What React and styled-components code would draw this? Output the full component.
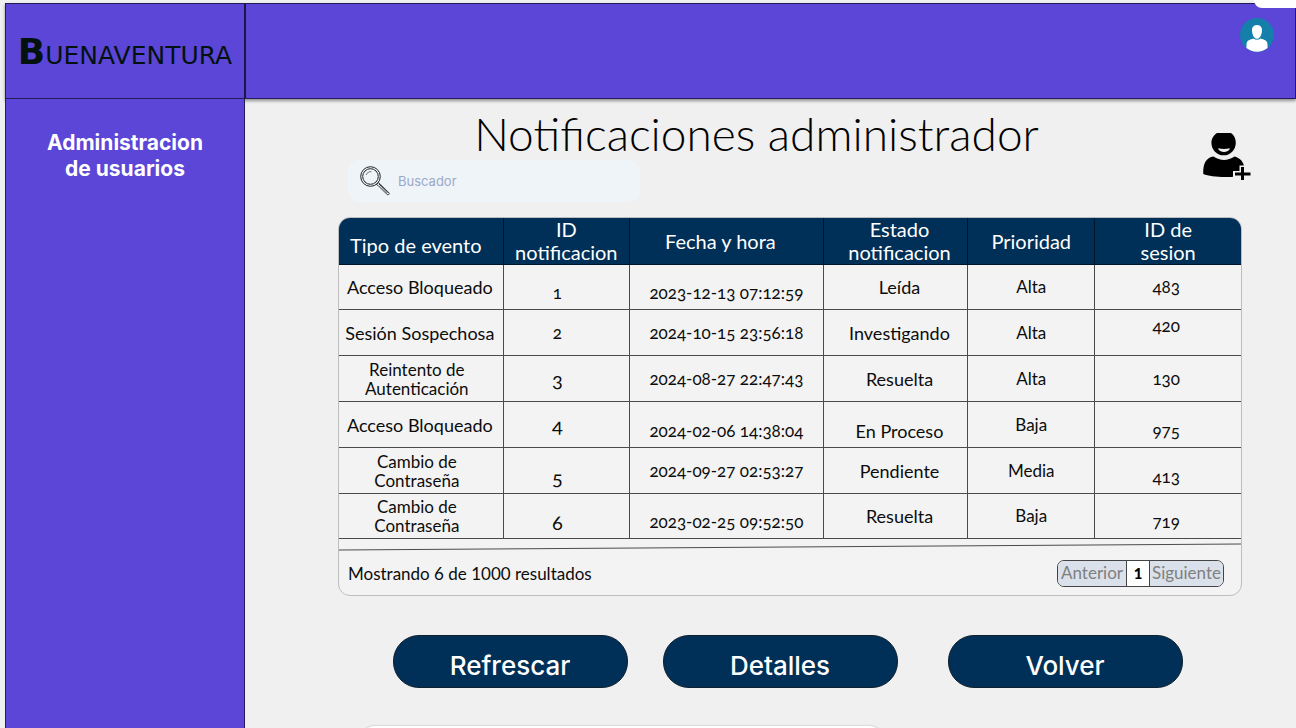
import React from "react";
import styled, { createGlobalStyle } from "styled-components";

const INTER = `Inter, "Liberation Sans", sans-serif`;
const LATO = `Lato, "Open Sans", sans-serif`;
const NAVY = "#003058";
const PURPLE = "#5b46d7";
const LINE = "#4a4a4a";

const GlobalStyle = createGlobalStyle`
  *, *::before, *::after { box-sizing: border-box; }
  body { margin: 0; background: #f0f0f0; }
  button, input { font: inherit; margin: 0; }
`;

const Page = styled.div`
  position: relative;
  display: flex;
  flex-direction: column;
  height: 100vh;
  padding: 3px 0 0 5px;
  overflow: hidden;
  font-family: ${LATO};
  color: #0c0c0c;
  background: #f0f0f0;
`;

const TopBar = styled.header`
  position: relative;
  display: flex;
  flex: none;
  height: 96px;
  background: ${PURPLE};
  border: 1px solid #241c55;
  box-shadow: 0 2px 3px rgba(0, 0, 0, 0.4);
`;

const Brand = styled.a`
  display: flex;
  align-items: baseline;
  justify-content: center;
  width: 240px;
  padding-top: 26px;
  border-right: 2px solid #1d1645;
  font-family: "DejaVu Sans", sans-serif;
  font-size: 25px;
  line-height: 44px;
  color: #04120f;
  text-decoration: none;
`;

const BrandInitial = styled.span`
  font-size: 36px;
  font-weight: 700;
`;

const AccountButton = styled.button`
  align-self: flex-start;
  width: 34px;
  height: 34px;
  margin: 14px 21px 0 auto;
  padding: 0;
  border: 0;
  background: none;
  cursor: pointer;

  svg { display: block; }
`;

const Body = styled.div`
  display: flex;
  flex: 1;
  min-height: 0;
`;

const Sidebar = styled.nav`
  position: relative;
  flex: none;
  width: 240px;
  padding: 31px 40px;
  text-align: center;
  background: ${PURPLE};
  border: solid #241c55;
  border-width: 0 1px;
`;

const SidebarLink = styled.a`
  font-family: ${INTER};
  font-size: 21px;
  font-weight: 700;
  line-height: 26px;
  color: #fff;
  text-decoration: none;
`;

const Main = styled.main`
  flex: 1;
  min-width: 0;
  padding: 13px 54px 0 93px;
`;

const Heading = styled.div`
  display: flex;
  align-items: center;
  gap: 28px;
  margin-right: -9px;
`;

const HeadingText = styled.div`
  flex: 1;
`;

const Title = styled.h1`
  margin: 0;
  padding-bottom: 4px;
  font-size: 46px;
  font-weight: 300;
  line-height: 44px;
  text-align: center;
  color: #000;
`;

const AddUserButton = styled.button`
  flex: none;
  width: 48px;
  height: 48px;
  padding: 0;
  border: 0;
  background: none;
  cursor: pointer;

  svg { display: block; }
`;

const Search = styled.label`
  display: flex;
  align-items: center;
  gap: 8px;
  width: 292px;
  height: 42px;
  margin-left: 10px;
  padding: 0 12px;
  border-radius: 12px;
  background: #eff4f9;

  svg { flex: none; }
`;

const SearchInput = styled.input`
  flex: 1;
  min-width: 0;
  padding: 0;
  border: 0;
  outline: 0;
  background: none;
  font-family: ${INTER};
  font-size: 13px;
  color: #33415c;

  &::placeholder { color: #9aa9c8; opacity: 1; }
`;

const Card = styled.section`
  margin-top: 15px;
  overflow: hidden;
  border: 1px solid #bdbdbd;
  border-radius: 12px;
  background: #f3f3f3;
`;

const Table = styled.table`
  width: 100%;
  table-layout: fixed;
  border-collapse: collapse;
`;

const Col = styled.col`
  width: ${(p) => p.$share}%;
`;

const HeadCell = styled.th`
  height: 46px;
  padding: ${(p) => p.$pad || "0"};
  border: solid #00152b;
  border-width: 0 0 1px 1px;
  background: ${NAVY};
  font-size: 20px;
  font-weight: 400;
  line-height: 23px;
  color: #fff;

  &:first-child { border-left: 0; }
`;

const Row = styled.tr`
  height: ${(p) => (p.$edge ? "45px" : "46px")};
`;

const Cell = styled.td`
  padding: ${(p) => (p.$wrap ? "0 24px 0 16px" : p.$pad || "6px 0")};
  border: solid ${LINE};
  border-width: 0 0 1px 1px;
  font-size: ${(p) => p.$size}px;
  font-variant-numeric: oldstyle-nums;
  line-height: ${(p) => (p.$wrap ? "19px" : "20px")};
  text-align: center;
  vertical-align: ${(p) => p.$align || "middle"};

  &:first-child { border-left: 0; }
`;

const SlantedRule = styled.svg`
  display: block;
  width: 100%;
  height: 12px;
`;

const CardFooter = styled.footer`
  display: flex;
  align-items: center;
  justify-content: space-between;
  height: 44px;
  padding: 0 17px 0 9px;
  font-size: 17px;
`;

const Pagination = styled.nav`
  display: flex;
  height: 27px;
  overflow: hidden;
  border: 1px solid #444;
  border-radius: 7px;
`;

const PageButton = styled.button`
  width: ${(p) => (p.$current ? "24px" : p.$wide ? "73px" : "68px")};
  padding: 0;
  border: solid #444;
  border-width: ${(p) => (p.$current ? "0 1px" : "0")};
  background: ${(p) => (p.$current ? "#fff" : "#dae1ea")};
  font-size: ${(p) => (p.$current ? "15px" : "17px")};
  font-weight: ${(p) => (p.$current ? 900 : 400)};
  line-height: 24px;
  color: ${(p) => (p.$current ? "#000" : "#808080")};
  cursor: pointer;
`;

const Actions = styled.div`
  display: flex;
  justify-content: center;
  gap: 50px;
  padding: 39px 5px 0 0;
`;

const ActionPair = styled.div`
  display: flex;
  gap: 35px;
`;

const ActionButton = styled.button`
  width: 235px;
  height: 53px;
  padding: 8px 0 0;
  border: 1px solid #10202c;
  border-radius: 26px;
  background: ${NAVY};
  font-family: ${INTER};
  font-size: 26px;
  font-weight: 500;
  line-height: 32px;
  color: #fff;
  cursor: pointer;
`;

const CornerTab = styled.div`
  position: absolute;
  top: 0;
  right: 0;
  width: 42px;
  height: 8px;
  border-bottom-left-radius: 14px;
  background: #fff;
`;

const BottomTray = styled.div`
  position: absolute;
  left: 362px;
  bottom: -46px;
  width: 520px;
  height: 48px;
  border-radius: 12px;
  background: #fff;
  box-shadow: 0 0 2px rgba(0, 0, 0, 0.3);
`;

const AccountIcon = () => (
  <svg width="34" height="34" viewBox="0 0 34 34" aria-hidden="true">
    <circle cx="17" cy="17" r="17" fill="#147fab" />
    <path
      d="M17 7c-4 0-5.400 3-4.900 6.500.4 4 2.300 7.300 4.900 7.300s4.500-3.300 4.900-7.300C22.400 10 21 7 17 7Z"
      fill="#fff"
    />
    <path
      d="M13.500 20.500C10 21.500 7 22.500 6.600 25.500l-.2 4.500A17 17 0 0 0 27.600 30l-.2-4.500c-.4-3-3.400-4-6.900-5-1.800 1.600-5.200 1.600-7 0Z"
      fill="#fff"
    />
  </svg>
);

const AddUserIcon = () => (
  <svg width="48" height="48" viewBox="0 0 48 48" aria-hidden="true">
    <path d="M14 0h14c3 2 4.800 5.500 4.800 9.800a12.200 12.500 0 0 1-24.400 0C8.400 5.500 11 2 14 0Z" />
    <path d="M15 15.200c4 1 8 1 12 0-1.500 5-10.500 5-12 0Z" fill="#f0f0f0" />
    <path d="M10.500 23.500c7 4.500 14 4.500 21 0 5 1.200 9.500 5 9.800 12V42c-4 1.500-11 2-19 2C13 44 5 43 .3 41 -.2 32 2.500 24.500 10.500 23.500Z" />
    <path d="M39.500 32.500V48M30 41h18" stroke="#f0f0f0" strokeWidth="6" />
    <path d="M39.500 34v13M32 41h15.500" stroke="#000" strokeWidth="3" />
  </svg>
);

const SearchIcon = () => (
  <svg width="30" height="30" viewBox="0 0 30 30" fill="none" stroke="#222" aria-hidden="true">
    <circle cx="10.500" cy="10.500" r="9.800" />
    <circle cx="10.500" cy="10.500" r="7.800" />
    <path d="M6 9c1-2.500 3-3.500 5.500-3.300" strokeWidth=".6" />
    <path d="m16.500 18.500 1.800-1.800 2 1.500 9 9c.2 1-1 2-2 1.500l-9-9-1.800-1.200M19 18l8.500 9" strokeWidth=".9" />
  </svg>
);

const columns = [
  { label: "Tipo de evento", share: 18.2, size: 18, headPad: "8px 10px 0 0", pad: "6px 2px 6px 0" },
  { label: <>ID<br />notificacion</>, share: 14, size: 17, pad: "6px 18px 6px 0" },
  { label: "Fecha y hora", share: 21.5, size: 17, headPad: "0 12px 0 0" },
  { label: <>Estado<br />notificacion</>, share: 16, size: 18, headPad: "0 0 0 8px", pad: "6px 0 6px 8px" },
  { label: "Prioridad", share: 14.1, size: 17 },
  { label: <>ID de<br />sesion</>, share: 16.2, size: 17, pad: "6px 4px 6px 0" },
];

const rows = [
  { values: ["Acceso Bloqueado", "1", "2023-12-13 07:12:59", "Leída", "Alta", "483"], align: ["", "bottom", "bottom"] },
  { values: ["Sesión Sospechosa", "2", "2024-10-15 23:56:18", "Investigando", "Alta", "420"], align: ["", "", "", "", "", "top"] },
  { values: ["Reintento de Autenticación", "3", "2024-08-27 22:47:43", "Resuelta", "Alta", "130"], align: [] },
  { values: ["Acceso Bloqueado", "4", "2024-02-06 14:38:04", "En Proceso", "Baja", "975"], align: ["", "", "bottom", "bottom", "", "bottom"] },
  { values: ["Cambio de Contraseña", "5", "2024-09-27 02:53:27", "Pendiente", "Media", "413"], align: ["", "bottom", "", "", "", "bottom"] },
  { values: ["Cambio de Contraseña", "6", "2023-02-25 09:52:50", "Resuelta", "Baja", "719"], align: ["", "bottom", "bottom", "", "", "bottom"] },
];

export default function App() {
  return (
    <Page>
      <GlobalStyle />
      <TopBar>
        <Brand href="#">
          <BrandInitial>B</BrandInitial>UENAVENTURA
        </Brand>
        <AccountButton aria-label="Cuenta">
          <AccountIcon />
        </AccountButton>
      </TopBar>
      <Body>
        <Sidebar>
          <SidebarLink href="#usuarios">Administracion de usuarios</SidebarLink>
        </Sidebar>
        <Main>
          <Heading>
            <HeadingText>
              <Title>Notificaciones administrador</Title>
              <Search>
                <SearchIcon />
                <SearchInput type="search" placeholder="Buscador" aria-label="Buscador" />
              </Search>
            </HeadingText>
            <AddUserButton aria-label="Agregar usuario">
              <AddUserIcon />
            </AddUserButton>
          </Heading>
          <Card>
            <Table>
              <colgroup>
                {columns.map((c, i) => <Col key={i} $share={c.share} />)}
              </colgroup>
              <thead>
                <tr>
                  {columns.map((c, i) => (
                    <HeadCell key={i} scope="col" $pad={c.headPad}>{c.label}</HeadCell>
                  ))}
                </tr>
              </thead>
              <tbody>
                {rows.map((row, r) => (
                  <Row key={r} $edge={r === 0 || r === rows.length - 1}>
                    {row.values.map((value, c) => {
                      const wrap = c === 0 && value.length > 17;
                      const large = c === 1 && r > 1;
                      return (
                        <Cell
                          key={c}
                          $align={row.align[c]}
                          $wrap={wrap}
                          $pad={columns[c].pad}
                          $size={large ? 20 : wrap ? 17 : columns[c].size}
                        >
                          {value}
                        </Cell>
                      );
                    })}
                  </Row>
                ))}
              </tbody>
            </Table>
            <SlantedRule viewBox="0 0 904 12" preserveAspectRatio="none" aria-hidden="true">
              <line x1="0" y1="11" x2="904" y2="5" stroke={LINE} />
            </SlantedRule>
            <CardFooter>
              <span>Mostrando 6 de 1000 resultados</span>
              <Pagination aria-label="Paginación">
                <PageButton>Anterior</PageButton>
                <PageButton $current aria-current="page">1</PageButton>
                <PageButton $wide>Siguiente</PageButton>
              </Pagination>
            </CardFooter>
          </Card>
          <Actions>
            <ActionPair>
              <ActionButton>Refrescar</ActionButton>
              <ActionButton>Detalles</ActionButton>
            </ActionPair>
            <ActionButton>Volver</ActionButton>
          </Actions>
        </Main>
      </Body>
      <CornerTab />
      <BottomTray />
    </Page>
  );
}
